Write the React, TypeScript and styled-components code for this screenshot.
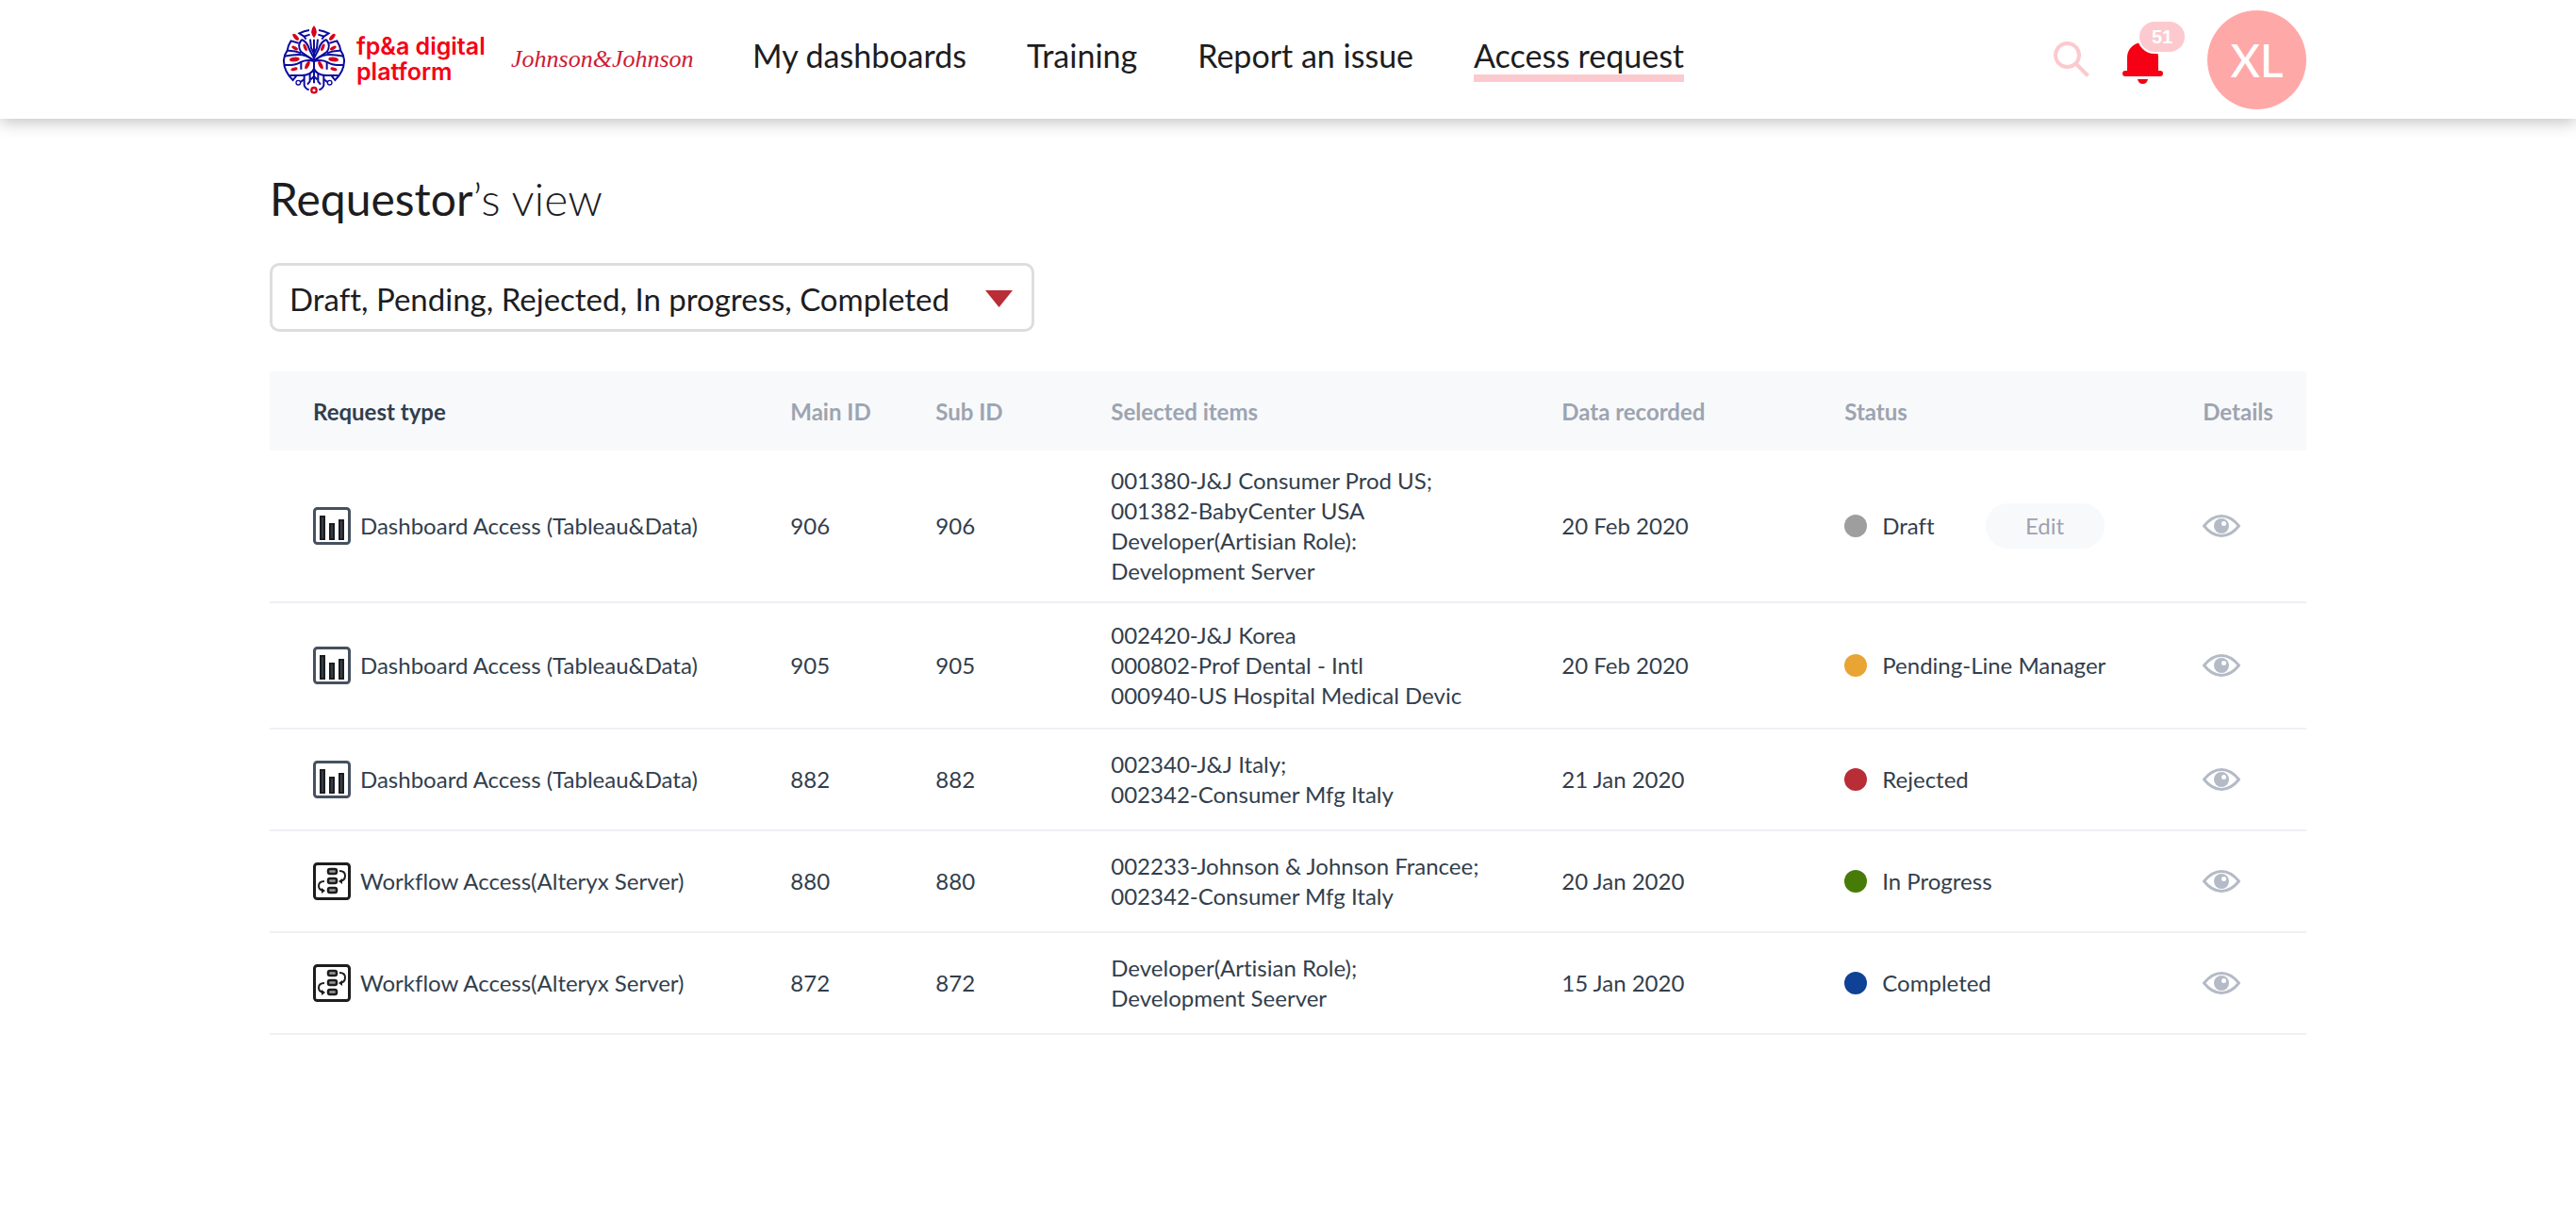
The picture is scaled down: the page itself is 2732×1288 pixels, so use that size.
import React from "react";
import styled, { createGlobalStyle } from "styled-components";

const GlobalStyle = createGlobalStyle`
  *, *::before, *::after { box-sizing: border-box; }
  body {
    margin: 0;
    background: #fff;
    color: #1d1d1f;
    font-family: Lato, "Liberation Sans", sans-serif;
    font-variant-ligatures: none;
  }
`;

const Header = styled.header`
  background: #fff;
  box-shadow: 0 4px 16px rgba(0, 0, 0, 0.24);
`;

const HeaderInner = styled.div`
  display: flex;
  align-items: center;
  max-width: 2160px;
  height: 126px;
  margin: 0 auto;
  padding-left: 14px;
`;

const Brand = styled.a`
  display: flex;
  align-items: center;
  gap: 12px;
  width: 242px;
  color: #f50014;
  font: 600 25px/27px Inter, "Liberation Sans", sans-serif;
  text-decoration: none;
  white-space: nowrap;
`;

const Company = styled.span`
  width: 256px;
  color: #ce1a33;
  font: italic 26px/36px "Liberation Serif", serif;
  white-space: nowrap;
`;

const Nav = styled.nav`
  display: flex;
  gap: 64px;
`;

const NavLink = styled.a<{ $active?: boolean }>`
  border-bottom: 8px solid ${(p) => (p.$active ? "#fccace" : "transparent")};
  margin-bottom: 8px;
  padding-top: 8px;
  color: #1d1d1f;
  font-size: 34px;
  line-height: 40px;
  text-decoration: none;
  white-space: nowrap;
`;

const Actions = styled.div`
  display: flex;
  align-items: center;
  gap: 25px;
  margin-left: auto;
`;

const IconButton = styled.button`
  display: flex;
  position: relative;
  padding: 0;
  border: 0;
  background: none;
  cursor: pointer;
`;

const BellButton = styled(IconButton)`
  width: 65px;
  margin-left: 10px;
  padding-top: 8px;
`;

const Badge = styled.span`
  position: absolute;
  top: -16px;
  left: 16px;
  width: 52px;
  border: 2px solid #fff;
  border-radius: 18px;
  background: #fccace;
  color: #fff;
  font-size: 20px;
  font-weight: 700;
  line-height: 32px;
  text-align: center;
`;

const Avatar = styled.button`
  width: 105px;
  height: 105px;
  padding: 0;
  border: 0;
  border-radius: 50%;
  background: #ffa8a8;
  color: #fff;
  font: 500 48px/105px Lato, "Liberation Sans", sans-serif;
`;

const Main = styled.main`
  max-width: 2160px;
  margin: 0 auto;
  padding: 57px 0 64px;
`;

const Title = styled.h1`
  margin: 0 0 40px;
  font-size: 48px;
  font-weight: 400;
  line-height: 56px;
`;

const Light = styled.span`
  font-weight: 300;
`;

const Filter = styled.div`
  position: relative;
  width: 811px;
  max-width: 100%;
  margin-bottom: 42px;
`;

const Select = styled.select`
  display: block;
  appearance: none;
  width: 100%;
  height: 73px;
  padding: 2px 72px 0 18px;
  border: 3px solid #dcddde;
  border-radius: 10px;
  background: #fff;
  color: #1d1d1f;
  font: 400 33px/40px Lato, "Liberation Sans", sans-serif;
  font-variant-ligatures: none;
`;

const Arrow = styled.svg`
  position: absolute;
  top: 29px;
  right: 23px;
  pointer-events: none;
`;

const Table = styled.table`
  width: 100%;
  border-collapse: separate;
  border-spacing: 0;
  table-layout: fixed;
  color: #323e4c;
  font-size: 24px;
  line-height: 32px;
  text-align: left;
`;

const Col = styled.col<{ $share: number }>`
  width: ${(p) => p.$share}%;
`;

const HeadCell = styled.th<{ $first?: boolean }>`
  padding: 27px 0 25px ${(p) => (p.$first ? 46 : 0)}px;
  background: #f8f9fb;
  color: ${(p) => (p.$first ? "#323e4c" : "#9ca4b1")};
  font-weight: 700;
`;

const Cell = styled.td<{ $first?: boolean; $pad: number }>`
  padding: ${(p) => p.$pad}px 0 ${(p) => p.$pad}px ${(p) => (p.$first ? 46 : 0)}px;
  border-bottom: 2px solid #eff0f4;
  vertical-align: middle;
  white-space: nowrap;
`;

const TypeLabel = styled.div`
  display: flex;
  align-items: center;
  gap: 10px;
`;

const Status = styled.div`
  display: flex;
  align-items: center;
  gap: 16px;
`;

const Dot = styled.span<{ $color: string }>`
  width: 24px;
  height: 24px;
  border-radius: 50%;
  background: ${(p) => p.$color};
`;

const EditButton = styled.button`
  width: 126px;
  height: 48px;
  margin-left: 38px;
  border: 0;
  border-radius: 24px;
  background: #f8f9fb;
  color: #9ca4b1;
  font: 400 24px/32px Lato, "Liberation Sans", sans-serif;
`;

const TreeLogo = () => (
  <svg width="66" height="73" viewBox="60 78 198 219" fill="none" aria-hidden="true">
    <g stroke="#0b0b9e" strokeWidth="6">
      <path d="M159 122V262" />
      {[false, true].map((flip) => (
        <g key={String(flip)} transform={flip ? "translate(318 0) scale(-1 1)" : undefined}>
          <path d="M144 93Q128 95 112 103L127 113L146 107M127 113L134 122" />
          <path d="M147 122L150 150L159 168" />
          <path d="M120 123Q104 142 118 162L159 190M120 123Q138 130 144 154L159 182" />
          <path d="M110 134L86 127Q77 140 74 158Q98 157 118 166M74 158Q64 172 63 188Q62 222 92 252L103 238" />
          <path d="M64 176Q106 168 122 172Q146 178 159 192M63 204Q98 206 114 196Q134 184 159 192" />
          <path d="M118 194V218M159 216Q150 236 120 237H82" />
          <path d="M128 236V268Q130 278 143 283M146 232V256L138 266M159 240L149 250" />
          <circle cx="109" cy="260" r="7" strokeWidth="4" fill="#fff" />
          <path d="M116 258L127 250" />
        </g>
      ))}
    </g>
    <g fill="#d5001c">
      <path d="M159 78Q176 98 159 118Q142 98 159 78Z" />
      {[false, true].map((flip) => (
        <g key={String(flip)} transform={flip ? "translate(318 0) scale(-1 1)" : undefined}>
          <ellipse cx="101" cy="115" rx="13" ry="6" transform="rotate(48 101 115)" />
          <ellipse cx="98" cy="150" rx="11" ry="5" transform="rotate(28 98 150)" />
          <ellipse cx="131" cy="148" rx="12" ry="5" transform="rotate(68 131 148)" />
          <ellipse cx="97" cy="186" rx="16" ry="7" transform="rotate(-5 97 186)" />
          <ellipse cx="96" cy="217" rx="11" ry="5" transform="rotate(-15 96 217)" />
          <ellipse cx="138" cy="204" rx="14" ry="6" transform="rotate(-65 138 204)" />
        </g>
      ))}
    </g>
    <circle cx="159" cy="284" r="8" stroke="#d5001c" strokeWidth="7" fill="#fff" />
  </svg>
);

const SearchIcon = () => (
  <svg width="38" height="38" viewBox="0 0 38 38" fill="none" stroke="#fccace" strokeWidth="4" aria-hidden="true">
    <circle cx="14.5" cy="14.5" r="12.5" />
    <path d="M23.5 23.5L36.5 36.5" />
  </svg>
);

const BellIcon = () => (
  <svg width="43" height="44" viewBox="0 0 43 44" fill="#f50014" aria-hidden="true">
    <path d="M21.5 0C12 0 5 7 5 16V30H3a3 3 0 0 0 0 6H40a3 3 0 0 0 0-6H38V16C38 7 31 0 21.5 0Z" />
    <path d="M16 39H27Q26 44 21.5 44Q17 44 16 39Z" />
  </svg>
);

const DashboardIcon = () => (
  <svg width="40" height="40" viewBox="0 0 40 40" aria-hidden="true">
    <rect x="1.5" y="1.5" width="37" height="37" rx="3" fill="#fff" stroke="#465160" strokeWidth="3" />
    <g fill="#323e4c" stroke="#1d1d1f" strokeWidth="2">
      <rect x="8" y="10" width="4" height="24" />
      <rect x="18" y="18" width="4" height="16" />
      <rect x="28" y="14" width="4" height="20" />
    </g>
  </svg>
);

const WorkflowIcon = () => (
  <svg width="40" height="40" viewBox="0 0 40 40" fill="none" stroke="#1d1d1f" aria-hidden="true">
    <rect x="1.5" y="1.5" width="37" height="37" rx="3" strokeWidth="3" />
    <g fill="#9a9a9a" strokeWidth="2.5">
      <rect x="16" y="7" width="9" height="5" rx="2" />
      <rect x="16" y="17" width="9" height="5" rx="2" />
      <rect x="16" y="27" width="9" height="5" rx="2" />
    </g>
    <path d="M28 9Q34 9 34 14Q34 19 29 20M12 20Q6 20 6 25Q6 29 11 30" strokeWidth="2" />
    <path d="M31 17L27 20L31 23ZM9 27L13 30L9 33Z" fill="#1d1d1f" stroke="none" />
  </svg>
);

const EyeIcon = () => (
  <svg width="40" height="24" viewBox="0 0 40 24" aria-hidden="true">
    <path d="M1.5 12Q10 1.5 20 1.5T38.5 12Q30 22.5 20 22.5T1.5 12Z" fill="#fff" stroke="#b4bbc6" strokeWidth="3" strokeLinejoin="round" />
    <circle cx="20" cy="12" r="8" fill="#b4bbc6" />
    <circle cx="22.5" cy="9.5" r="2.5" fill="#fff" />
  </svg>
);

type Request = {
  kind: "dashboard" | "workflow";
  id: string;
  items: string[];
  date: string;
  status: string;
  color: string;
  pad: number;
  editable?: boolean;
};

const kinds = {
  dashboard: { label: "Dashboard Access (Tableau&Data)", Icon: DashboardIcon },
  workflow: { label: "Workflow Access(Alteryx Server)", Icon: WorkflowIcon },
};

const requests: Request[] = [
  {
    kind: "dashboard",
    id: "906",
    items: ["001380-J&J Consumer Prod US;", "001382-BabyCenter USA", "Developer(Artisian Role):", "Development Server"],
    date: "20 Feb 2020",
    status: "Draft",
    color: "#9e9e9e",
    pad: 16,
    editable: true,
  },
  {
    kind: "dashboard",
    id: "905",
    items: ["002420-J&J Korea", "000802-Prof Dental - Intl", "000940-US Hospital Medical Devic"],
    date: "20 Feb 2020",
    status: "Pending-Line Manager",
    color: "#e8a534",
    pad: 18,
  },
  {
    kind: "dashboard",
    id: "882",
    items: ["002340-J&J Italy;", "002342-Consumer Mfg Italy"],
    date: "21 Jan 2020",
    status: "Rejected",
    color: "#b92d36",
    pad: 21,
  },
  {
    kind: "workflow",
    id: "880",
    items: ["002233-Johnson & Johnson Francee;", "002342-Consumer Mfg Italy"],
    date: "20 Jan 2020",
    status: "In Progress",
    color: "#477b07",
    pad: 21,
  },
  {
    kind: "workflow",
    id: "872",
    items: ["Developer(Artisian Role);", "Development Seerver"],
    date: "15 Jan 2020",
    status: "Completed",
    color: "#0f4194",
    pad: 21,
  },
];

const shares = [25.57, 7.13, 8.61, 22.13, 13.89, 17.59, 5.08];

const filterLabel = "Draft, Pending, Rejected, In progress, Completed";

export default function App() {
  return (
    <>
      <GlobalStyle />
      <Header>
        <HeaderInner>
          <Brand href="#">
            <TreeLogo />
            <span>
              fp&amp;a digital
              <br />
              platform
            </span>
          </Brand>
          <Company>Johnson&amp;Johnson</Company>
          <Nav>
            <NavLink href="#">My dashboards</NavLink>
            <NavLink href="#">Training</NavLink>
            <NavLink href="#">Report an issue</NavLink>
            <NavLink href="#" $active aria-current="page">
              Access request
            </NavLink>
          </Nav>
          <Actions>
            <IconButton aria-label="Search">
              <SearchIcon />
            </IconButton>
            <BellButton aria-label="Notifications">
              <BellIcon />
              <Badge>51</Badge>
            </BellButton>
            <Avatar>XL</Avatar>
          </Actions>
        </HeaderInner>
      </Header>
      <Main>
        <Title>
          Requestor<Light>’s view</Light>
        </Title>
        <Filter>
          <Select aria-label="Status filter">
            <option>{filterLabel}</option>
          </Select>
          <Arrow width="29" height="18" viewBox="0 0 29 18" aria-hidden="true">
            <path d="M0 0H29L14.5 18Z" fill="#b92d36" />
          </Arrow>
        </Filter>
        <Table>
          <colgroup>
            {shares.map((share, i) => (
              <Col key={i} $share={share} />
            ))}
          </colgroup>
          <thead>
            <tr>
              <HeadCell $first>Request type</HeadCell>
              <HeadCell>Main ID</HeadCell>
              <HeadCell>Sub ID</HeadCell>
              <HeadCell>Selected items</HeadCell>
              <HeadCell>Data recorded</HeadCell>
              <HeadCell>Status</HeadCell>
              <HeadCell>Details</HeadCell>
            </tr>
          </thead>
          <tbody>
            {requests.map((r) => {
              const { label, Icon } = kinds[r.kind];
              return (
                <tr key={r.id}>
                  <Cell $first $pad={r.pad}>
                    <TypeLabel>
                      <Icon />
                      {label}
                    </TypeLabel>
                  </Cell>
                  <Cell $pad={r.pad}>{r.id}</Cell>
                  <Cell $pad={r.pad}>{r.id}</Cell>
                  <Cell $pad={r.pad}>
                    {r.items.map((item) => (
                      <div key={item}>{item}</div>
                    ))}
                  </Cell>
                  <Cell $pad={r.pad}>{r.date}</Cell>
                  <Cell $pad={r.pad}>
                    <Status>
                      <Dot $color={r.color} />
                      {r.status}
                      {r.editable && <EditButton>Edit</EditButton>}
                    </Status>
                  </Cell>
                  <Cell $pad={r.pad}>
                    <IconButton aria-label={`Details of request ${r.id}`}>
                      <EyeIcon />
                    </IconButton>
                  </Cell>
                </tr>
              );
            })}
          </tbody>
        </Table>
      </Main>
    </>
  );
}
